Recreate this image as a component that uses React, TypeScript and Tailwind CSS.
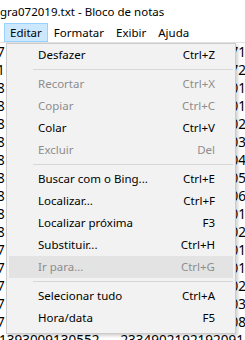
const menuBar = ['Editar', 'Formatar', 'Exibir', 'Ajuda'];

type Entry = { label: string; shortcut?: string; disabled?: boolean; hover?: boolean } | 'sep';

const entries: Entry[] = [
  { label: 'Desfazer', shortcut: 'Ctrl+Z' },
  'sep',
  { label: 'Recortar', shortcut: 'Ctrl+X', disabled: true },
  { label: 'Copiar', shortcut: 'Ctrl+C', disabled: true },
  { label: 'Colar', shortcut: 'Ctrl+V' },
  { label: 'Excluir', shortcut: 'Del', disabled: true },
  'sep',
  { label: 'Buscar com o Bing...', shortcut: 'Ctrl+E' },
  { label: 'Localizar...', shortcut: 'Ctrl+F' },
  { label: 'Localizar próxima', shortcut: 'F3' },
  { label: 'Substituir...', shortcut: 'Ctrl+H' },
  { label: 'Ir para...', shortcut: 'Ctrl+G', disabled: true, hover: true },
  'sep',
  { label: 'Selecionar tudo', shortcut: 'Ctrl+A' },
  { label: 'Hora/data', shortcut: 'F5' },
];

// left edge / right edge of each text line peeking out from behind the menu
const lines: [string, string][] = [
  ['7', '71'],
  ['1', '72'],
  ['8', '01'],
  ['8', '01'],
  ['8', '02'],
  ['8', '03'],
  ['8', '04'],
  ['8', '05'],
  ['8', '06'],
  ['8', '01'],
  ['8', '02'],
  ['7', '01'],
  ['7', '01'],
  ['7', '02'],
  ['7', '03'],
  ['7', '08'],
];

function EditMenu() {
  return (
    <div className="absolute left-[6px] top-[43px] w-[230px] border border-[#cccccc] bg-[#f2f2f2] pb-[4px] text-[11.5px] shadow-[2px_2px_3px_rgba(0,0,0,0.18)]">
      {entries.map((e, i) =>
        e === 'sep' ? (
          <div key={i} className="flex h-[7px] items-center pl-[26px] pr-[2px]">
            <div className="h-px w-full bg-[#d7d7d7]" />
          </div>
        ) : (
          <div
            key={i}
            className={`mx-[2px] flex h-[22px] items-center justify-between pl-[29px] pr-[18px] ${
              e.hover ? 'bg-[#e3e3e3]' : ''
            } ${e.disabled ? 'text-[#8d8d8d]' : 'text-black'}`}
          >
            <span>{e.label}</span>
            <span>{e.shortcut}</span>
          </div>
        )
      )}
    </div>
  );
}

export default function App() {
  return (
    <div className="relative h-[340px] w-[245px] overflow-hidden bg-white font-['Noto_Sans',sans-serif] text-black">
      <div className="flex h-[23px] items-center whitespace-nowrap text-[11.5px]">gra072019.txt - Bloco de notas</div>
      <div className="flex h-[20px] border-b border-[#e3e3e3] pl-[4px] text-[11.5px]">
        {menuBar.map((m, i) => (
          <div
            key={m}
            className={`flex items-center border px-[5px] ${
              i === 0 ? 'border-[#99d1ff] bg-[#cce8ff]' : 'border-transparent'
            }`}
          >
            {m}
          </div>
        ))}
      </div>
      <div className="text-[13.5px] leading-[18px]">
        {lines.map(([l, r], i) => (
          <div key={i} className="-ml-[3px] flex w-[249px] justify-between whitespace-nowrap">
            <span>{l}</span>
            <span>{r}</span>
          </div>
        ))}
        <div className="-ml-[1px] flex whitespace-nowrap">
          <span>1393009130552</span>
          <span className="ml-[21px]">23349021921920911</span>
        </div>
      </div>
      <EditMenu />
    </div>
  );
}
